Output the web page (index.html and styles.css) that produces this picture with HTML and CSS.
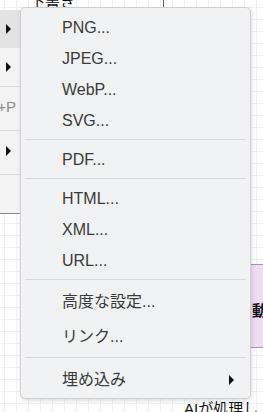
FILE: index.html
```html
<!DOCTYPE html>
<html lang="ja">
    <head>
        <meta charset="utf-8">
        <title>エクスポート</title>
        <link rel="stylesheet" href="styles.css">
    </head>
    <body>
        <div class="canvas">
            <div class="draft">下書き</div>
            <div class="edge"></div>
            <div class="shape"><span>動</span></div>
            <div class="note">AIが処理して</div>

            <!-- parent menu, mostly hidden behind the submenu -->
            <div class="parent">
                <div class="prow active"><span class="arrow"></span></div>
                <div class="prow"><span class="arrow"></span></div>
                <div class="prow line"><span class="key">Ctrl+P</span></div>
                <div class="prow line"><span class="arrow"></span></div>
                <div class="prow line"></div>
            </div>

            <div class="menu">
                <div class="item">PNG...</div>
                <div class="item">JPEG...</div>
                <div class="item">WebP...</div>
                <div class="item">SVG...</div>
                <div class="sep"></div>
                <div class="item">PDF...</div>
                <div class="sep"></div>
                <div class="item">HTML...</div>
                <div class="item">XML...</div>
                <div class="item">URL...</div>
                <div class="sep"></div>
                <div class="item ja">高度な設定...</div>
                <div class="item ja">リンク...</div>
                <div class="sep"></div>
                <div class="item ja sub">埋め込み<span class="arrow"></span></div>
            </div>
        </div>
    </body>
</html>
```

FILE: styles.css
```css
body {
    margin: 0;
    font-family: "Liberation Sans", "Noto Sans CJK JP", sans-serif;
    background-color: #fff;
}
.canvas {
    position: relative;
    width: 263px;
    height: 412px;
    overflow: hidden;
    background-image:
        linear-gradient(#f0f0f0 1px, transparent 1px),
        linear-gradient(90deg, #f0f0f0 1px, transparent 1px);
    background-size: 12px 12px;
    background-position: 4px 7px;
}
.draft {
    position: absolute;
    left: 30px;
    top: -10px;
    font-size: 15px;
    color: #111;
}
.edge {
    position: absolute;
    left: 163px;
    top: 0;
    width: 1px;
    height: 8px;
    background: #666;
}
.shape {
    position: absolute;
    left: 249px;
    top: 264px;
    width: 40px;
    height: 82px;
    background: #eedcf3;
    border: 1px solid #b08ac0;
    font-size: 15px;
    font-weight: bold;
    color: #111;
}
.shape span {
    position: absolute;
    left: 2px;
    top: 34px;
}
.note {
    position: absolute;
    left: 184px;
    top: 397px;
    font-size: 15px;
    color: #111;
}
.parent {
    position: absolute;
    left: 0;
    top: 10px;
    width: 160px;
    background: #f3f3f3;
    border-bottom: 1px solid #888;
}
.prow {
    position: relative;
    height: 38px;
}
.prow.line {
    height: 43px;
    border-top: 1px solid #dcdcdc;
}
.prow.line:last-child {
    height: 38px;
}
.prow.active {
    background: #e3e3e3;
}
.prow .arrow {
    position: absolute;
    left: 6px;
    top: 14px;
}
.prow:nth-child(4) .arrow {
    top: 15px;
}
.key {
    position: absolute;
    right: 144px;
    top: 11px;
    font-size: 15px;
    color: #8a8a8a;
}
.arrow {
    display: inline-block;
    width: 0;
    height: 0;
    border-top: 5px solid transparent;
    border-bottom: 5px solid transparent;
    border-left: 5px solid #111;
}
.menu {
    position: absolute;
    left: 20px;
    top: 7px;
    width: 229px;
    padding: 3.5px 0 1px;
    background: #f1f2f4;
    border: 1px solid #cfcfd3;
    border-radius: 5px;
    box-shadow: 1px 2px 4px rgba(0, 0, 0, 0.12);
}
.item {
    position: relative;
    height: 31px;
    line-height: 31px;
    padding-left: 41px;
    font-size: 16px;
    color: #3a3a3a;
}
.item.ja {
    height: 35px;
    line-height: 35px;
}
.sep {
    height: 1px;
    margin: 3.5px 4px;
    background: #d8d8db;
}
.item.sub .arrow {
    position: absolute;
    left: 208px;
    top: 13px;
}
```
